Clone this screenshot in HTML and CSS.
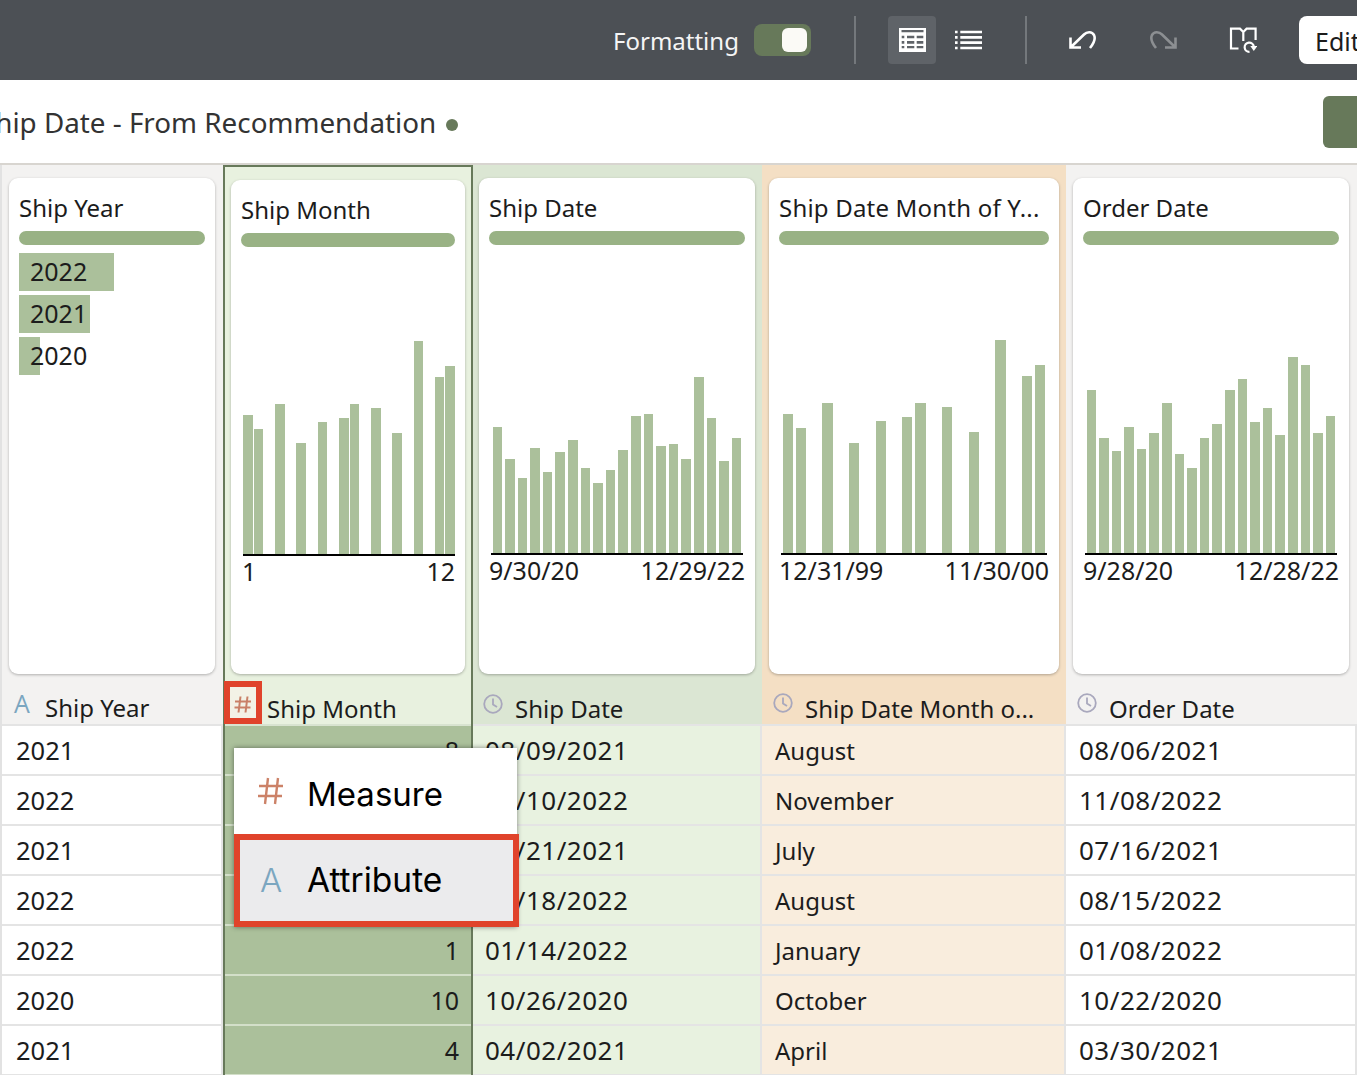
FILE: index.html
```html
<!doctype html>

<html lang="en">
<head>
  <meta charset="utf-8">
  <title>Ship Date - From Recommendation</title>
  <link rel="stylesheet" href="styles.css">
</head>

<body>
  <div class="toolbar">
    <span class="fmt-label">Formatting</span>
    <span class="toggle"><span class="knob"></span></span>
    <span class="sep sep-a"></span>
    <span class="tool-btn active">
      <svg width="27" height="24" viewBox="0 0 27 24"><path fill="#fff" d="M0 0h27v24H0z"/><path fill="#5f6368" d="M2.500 2h22v2.300h-22zM2.700 7.700h2.600v2.600H2.700zM8 7.700h7.300v2.600H8zM17.700 7.700h6.600v2.600h-6.600zM2.700 13h2.600v2.700H2.700zM8 13h7.300v2.700H8zM17.700 13h6.600v2.700h-6.600zM2.700 18h2.600v2.300H2.700zM8 18h7.300v2.300H8zM17.700 18h6.600v2.300h-6.600z"/></svg>
    </span>
    <span class="tool-btn list-btn">
      <svg width="28" height="20" viewBox="0 0 28 20"><path fill="#fff" d="M0 .7h2.600v2.600H0zM5.300 .7H27v2.600H5.300zM0 6h2.600v2.700H0zM5.300 6H27v2.700H5.300zM0 11.300h2.600V14H0zM5.300 11.300H27V14H5.300zM0 16.700h2.600v2.600H0zM5.300 16.700H27v2.600H5.300z"/></svg>
    </span>
    <span class="sep sep-b"></span>
    <svg class="tool-icon undo" width="28" height="20" viewBox="0 0 28 20"><path stroke="#fff" stroke-width="2.600" fill="none" d="M1.500 7.500v10H12M1.500 17.500L15 4.500C18 1.500 23 1.500 25 5c2 4 0 8-4 13"/></svg>
    <svg class="tool-icon redo" width="28" height="20" viewBox="0 0 28 20"><path stroke="#8c8f92" stroke-width="2.600" fill="none" d="M26.500 7.500v10H16M26.500 17.500L13 4.500C10 1.500 5 1.500 3 5c-2 4 0 8 4 13"/></svg>
    <svg class="tool-icon book" width="28" height="28" viewBox="0 0 28 28"><path stroke="#fff" stroke-width="2.200" fill="none" d="M9.500 22.500H2V2.700h9l3.300 3.300 3.300-3.300h9V14M14.300 6v9"/><path stroke="#fff" stroke-width="2.200" fill="none" d="M20.500 25.800A4.600 4.600 0 1 1 24.800 20.500"/><path fill="#fff" d="M21.300 20h7l-3.500 5z"/></svg>
    <span class="edit-btn">Edit</span>
  </div>

  <div class="subhead">
    <span class="page-title">Ship Date - From Recommendation</span>
    <span class="dot"></span>
    <span class="save-btn"></span>
  </div>

  <div class="grid">

    <div class="col col-year">
      <div class="profile">
        <div class="card">
          <div class="card-title">Ship Year</div>
          <div class="pill"></div>
          <div class="year-list">
            <div class="year-bar" style="background-size: 95px 100%">2022</div>
            <div class="year-bar" style="background-size: 71px 100%">2021</div>
            <div class="year-bar" style="background-size: 21px 100%">2020</div>
          </div>
        </div>
      </div>
      <div class="col-head"><span class="icon-a">A</span><span class="head-name">Ship Year</span></div>
      <div class="cell">2021</div>
      <div class="cell">2022</div>
      <div class="cell">2021</div>
      <div class="cell">2022</div>
      <div class="cell">2022</div>
      <div class="cell">2020</div>
      <div class="cell">2021</div>
    </div>

    <div class="col col-month">
      <div class="profile">
        <div class="card">
          <div class="card-title">Ship Month</div>
          <div class="pill"></div>
          <div class="plot plot-month">
            <i style="height:139px"></i><i style="height:125px"></i><b></b><i style="height:150px"></i><b></b><i style="height:111px"></i><b></b><i style="height:132px"></i><b></b><i style="height:136px"></i><i style="height:150px"></i><b></b><i style="height:146px"></i><b></b><i style="height:121px"></i><b></b><i style="height:213px"></i><b></b><i style="height:177px"></i><i style="height:188px"></i>
          </div>
          <div class="axis-labels axis-month"><span>1</span><span>12</span></div>
        </div>
      </div>
      <div class="col-head">
        <span class="type-box"><svg width="18" height="17" viewBox="0 0 18 17"><path stroke="#c98067" stroke-width="2" fill="none" d="M6.500 .5l-2 16M13.500 .5l-2 16M1 5.500h16M.5 11.500h16"/></svg></span>
        <span class="head-name">Ship Month</span>
      </div>
      <div class="cell num">8</div>
      <div class="cell num">11</div>
      <div class="cell num">7</div>
      <div class="cell num">8</div>
      <div class="cell num">1</div>
      <div class="cell num">10</div>
      <div class="cell num">4</div>
    </div>

    <div class="col col-date">
      <div class="profile">
        <div class="card">
          <div class="card-title">Ship Date</div>
          <div class="pill"></div>
          <div class="plot">
            <i style="height:126px"></i><i style="height:94px"></i><i style="height:75px"></i><i style="height:105px"></i><i style="height:81px"></i><i style="height:101px"></i><i style="height:113px"></i><i style="height:85px"></i><i style="height:70px"></i><i style="height:83px"></i><i style="height:103px"></i><i style="height:137px"></i><i style="height:139px"></i><i style="height:107px"></i><i style="height:109px"></i><i style="height:94px"></i><i style="height:176px"></i><i style="height:135px"></i><i style="height:92px"></i><i style="height:115px"></i>
          </div>
          <div class="axis-labels"><span>9/30/20</span><span>12/29/22</span></div>
        </div>
      </div>
      <div class="col-head">
        <svg class="clock" width="20" height="20" viewBox="0 0 20 20"><circle cx="10" cy="10" r="8.800" stroke="#a9a8bd" stroke-width="1.800" fill="none"/><path stroke="#a9a8bd" stroke-width="1.800" fill="none" d="M10 4.500V10.500l4 2.500"/></svg>
        <span class="head-name">Ship Date</span>
      </div>
      <div class="cell date">08/09/2021</div>
      <div class="cell date">11/10/2022</div>
      <div class="cell date">07/21/2021</div>
      <div class="cell date">08/18/2022</div>
      <div class="cell date">01/14/2022</div>
      <div class="cell date">10/26/2020</div>
      <div class="cell date">04/02/2021</div>
    </div>

    <div class="col col-moy">
      <div class="profile">
        <div class="card">
          <div class="card-title">Ship Date Month of Y...</div>
          <div class="pill"></div>
          <div class="plot">
            <i style="height:139px"></i><i style="height:125px"></i><b></b><i style="height:150px"></i><b></b><i style="height:110px"></i><b></b><i style="height:132px"></i><b></b><i style="height:136px"></i><i style="height:150px"></i><b></b><i style="height:146px"></i><b></b><i style="height:121px"></i><b></b><i style="height:213px"></i><b></b><i style="height:177px"></i><i style="height:188px"></i>
          </div>
          <div class="axis-labels"><span>12/31/99</span><span>11/30/00</span></div>
        </div>
      </div>
      <div class="col-head">
        <svg class="clock" width="20" height="20" viewBox="0 0 20 20"><circle cx="10" cy="10" r="8.800" stroke="#a9a8bd" stroke-width="1.800" fill="none"/><path stroke="#a9a8bd" stroke-width="1.800" fill="none" d="M10 4.500V10.500l4 2.500"/></svg>
        <span class="head-name">Ship Date Month o...</span>
      </div>
      <div class="cell">August</div>
      <div class="cell">November</div>
      <div class="cell">July</div>
      <div class="cell">August</div>
      <div class="cell">January</div>
      <div class="cell">October</div>
      <div class="cell">April</div>
    </div>

    <div class="col col-order">
      <div class="profile">
        <div class="card">
          <div class="card-title">Order Date</div>
          <div class="pill"></div>
          <div class="plot">
            <i style="height:163px"></i><i style="height:115px"></i><i style="height:102px"></i><i style="height:126px"></i><i style="height:104px"></i><i style="height:120px"></i><i style="height:150px"></i><i style="height:99px"></i><i style="height:85px"></i><i style="height:115px"></i><i style="height:129px"></i><i style="height:163px"></i><i style="height:174px"></i><i style="height:131px"></i><i style="height:145px"></i><i style="height:118px"></i><i style="height:196px"></i><i style="height:188px"></i><i style="height:120px"></i><i style="height:137px"></i>
          </div>
          <div class="axis-labels"><span>9/28/20</span><span>12/28/22</span></div>
        </div>
      </div>
      <div class="col-head">
        <svg class="clock" width="20" height="20" viewBox="0 0 20 20"><circle cx="10" cy="10" r="8.800" stroke="#a9a8bd" stroke-width="1.800" fill="none"/><path stroke="#a9a8bd" stroke-width="1.800" fill="none" d="M10 4.500V10.500l4 2.500"/></svg>
        <span class="head-name">Order Date</span>
      </div>
      <div class="cell date">08/06/2021</div>
      <div class="cell date">11/08/2022</div>
      <div class="cell date">07/16/2021</div>
      <div class="cell date">08/15/2022</div>
      <div class="cell date">01/08/2022</div>
      <div class="cell date">10/22/2020</div>
      <div class="cell date">03/30/2021</div>
    </div>

  </div>

  <div class="type-menu">
    <div class="menu-item">
      <svg class="menu-icon" width="26" height="28" viewBox="0 0 26 28"><path stroke="#cc8268" stroke-width="2.400" fill="none" d="M10 1L7 27M20 1l-3 26M1 9h24M0 19h24"/></svg>
      <span class="menu-measure">Measure</span>
    </div>
    <div class="menu-item selected">
      <span class="menu-a">A</span>
      <span>Attribute</span>
    </div>
  </div>
</body>
</html>
```

FILE: styles.css
```css
html, body {
  margin: 0;
  height: 1075px;
  overflow: hidden;
}

body {
  width: 1357px;
  position: relative;
  font-family: "Noto Sans", sans-serif;
  font-size: 25px;
  color: #1c1c1c;
  background: #fff;
}

/* top bar */
.toolbar {
  height: 80px;
  background: #4c5055;
  display: flex;
  align-items: center;
  padding-left: 613px;
  overflow: hidden;
  color: #f5f5f5;
}

.fmt-label {
  width: 141px;
  flex: none;
  font-size: 24px;
}

.toggle {
  width: 57px;
  height: 32px;
  border-radius: 8px;
  background: #67795a;
  flex: none;
  display: flex;
  align-items: center;
  justify-content: flex-end;
  padding-right: 4px;
  box-sizing: border-box;
}

.knob {
  width: 25px;
  height: 24px;
  background: #fbfaf6;
  border-radius: 6px;
}

.sep {
  width: 2px;
  height: 48px;
  background: #74787c;
  flex: none;
}

.sep-a { margin: 0 32px 0 43px; }
.sep-b { margin: 0 42px 0 32px; }

.tool-btn {
  width: 48px;
  height: 48px;
  flex: none;
  display: flex;
  align-items: center;
  justify-content: center;
  border-radius: 4px;
}

.tool-btn.active { background: #5f6368; }
.list-btn { margin-left: 9px; }

.tool-icon { flex: none; }
.undo { margin-right: 52px; }
.redo { margin-right: 52px; }
.book { margin-right: 42px; }

.edit-btn {
  flex: none;
  width: 120px;
  height: 48px;
  line-height: 50px;
  padding-left: 16px;
  box-sizing: border-box;
  background: #fff;
  border-radius: 8px;
  color: #1c1c1c;
}

/* title row */
.subhead {
  height: 83px;
  display: flex;
  align-items: center;
  overflow: hidden;
}

.page-title {
  margin-left: -20px;
  font-size: 27.800px;
  color: #333;
}

.dot {
  width: 12px;
  height: 12px;
  margin: 6px 0 0 10px;
  border-radius: 50%;
  background: #67795a;
  flex: none;
}

.save-btn {
  width: 80px;
  height: 52px;
  margin-left: auto;
  margin-right: -46px;
  border-radius: 6px;
  background: #67795a;
  flex: none;
}

/* data grid */
.grid {
  display: flex;
  border-top: 2px solid #d8d5d0;
}

.col {
  box-sizing: border-box;
  flex: none;
}

.col-year  { width: 223px; background: #f3f2f1; border-left: 2px solid #e2e2e2; }
.col-month { width: 250px; background: #e8f1df; border: 2px solid #67795a; border-bottom: 0; }
.col-date  { width: 289px; background: #dbe6d3; }
.col-moy   { width: 304px; background: #f4dfc4; }
.col-order { width: 291px; background: #f3f2f1; }

.profile {
  height: 525px;
  padding-top: 13px;
  box-sizing: border-box;
}

.col-month .profile { height: 523px; padding-top: 13px; }

.card {
  height: 496px;
  box-sizing: border-box;
  padding: 11px 10px 0;
  background: #fff;
  border-radius: 9px;
  box-shadow: 0 1px 3px rgba(0, 0, 0, 0.28);
}

.col-year .card  { width: 206px; margin-left: 7px; }
.col-month .card { width: 234px; margin-left: 6px; height: 494px; }
.col-date .card  { width: 276px; margin-left: 6px; }
.col-moy .card   { width: 290px; margin-left: 7px; }
.col-order .card { width: 276px; margin-left: 7px; }

.card-title {
  font-size: 24px;
  line-height: 38px;
  white-space: nowrap;
}

.col-moy .card-title { letter-spacing: 0.200px; }

.pill {
  height: 14px;
  margin-top: 4px;
  border-radius: 7px;
  background: #99b285;
}

.year-list {
  margin-top: 8px;
  display: flex;
  flex-direction: column;
  gap: 4px;
}

.year-bar {
  height: 38px;
  line-height: 37px;
  padding-left: 11px;
  background-image: linear-gradient(#abc09b, #abc09b);
  background-repeat: no-repeat;
}

.plot {
  height: 308px;
  margin: 0 2px;
  padding: 0 1.500px;
  border-bottom: 2px solid #000;
  display: flex;
  align-items: flex-end;
  gap: 3px;
}

.plot i, .plot b {
  flex: 1 1 0;
  background: #abc09b;
  display: block;
}

.plot b { background: none; }

.plot-month {
  height: 307px;
  margin-right: 0;
  padding: 0;
  gap: 1px;
}

.axis-labels {
  display: flex;
  justify-content: space-between;
  line-height: 30px;
}

.axis-month { padding-left: 1px; }

.col-head {
  height: 36px;
  box-sizing: border-box;
  border-bottom: 2px solid #e4e4e4;
  display: flex;
  align-items: flex-end;
  white-space: nowrap;
}

.col-month .col-head { border-bottom-color: #d8e3d0; }

.head-name {
  font-size: 24px;
  line-height: 31px;
}

.col-year .head-name { line-height: 32px; }

.icon-a {
  width: 43px;
  padding-left: 12px;
  box-sizing: border-box;
  font-family: "Open Sans", sans-serif;
  font-size: 25px;
  line-height: 42px;
  color: #7ba6c0;
}

.type-box {
  width: 38px;
  height: 43px;
  margin: 0 5px 0 -1px;
  border: 6px solid #e0432b;
  box-sizing: border-box;
  background: #f3f2e6;
  display: flex;
  align-items: center;
  justify-content: center;
  flex: none;
}

.type-box svg { margin-top: 3px; }

.clock {
  margin: 0 12px 10px 10px;
  flex: none;
}

.col-moy .clock, .col-order .clock { margin: 0 12px 11px 11px; }

.cell {
  height: 50px;
  line-height: 48px;
  box-sizing: border-box;
  padding: 0 12px;
  border-bottom: 2px solid #e4e4e4;
  border-right: 2px solid #e4e4e4;
  background: #fff;
  white-space: nowrap;
  font-size: 24px;
}

.cell.date {
  font-size: 26px;
  letter-spacing: 0.500px;
}

.col-year .cell { padding-left: 14px; font-size: 25.500px; }
.col-month .cell { background: #abc09b; border-bottom-color: #d3dfc9; border-right: 0; font-size: 25px; }
.col-date .cell { background: #e8f2e0; }
.col-moy .cell { background: #f9eddd; padding-left: 13px; line-height: 49px; }
.col-order .cell { padding-left: 13px; }

.num { text-align: right; }

/* pop-up over the grid */
.type-menu {
  position: absolute;
  left: 234px;
  top: 748px;
  width: 283px;
  background: #fff;
  box-shadow: 0 0 5px rgba(0, 0, 0, 0.45);
  font-family: Inter, sans-serif;
  font-size: 33.500px;
  color: #000;
}

.menu-item {
  height: 86px;
  display: flex;
  align-items: center;
  box-sizing: border-box;
  padding: 5px 0 0 24px;
}

.menu-icon { margin: -5px 24px 0 0; flex: none; }

.menu-measure {
  margin-left: -1px;
  font-size: 33px;
}

.menu-item.selected {
  width: 285px;
  height: 93px;
  padding: 0 0 2px 20px;
  border: 6px solid #e0432b;
  background: #ebebed;
}

.menu-a {
  width: 47px;
  font-weight: 300;
  font-size: 33px;
  color: #7ba6c0;
}
```
